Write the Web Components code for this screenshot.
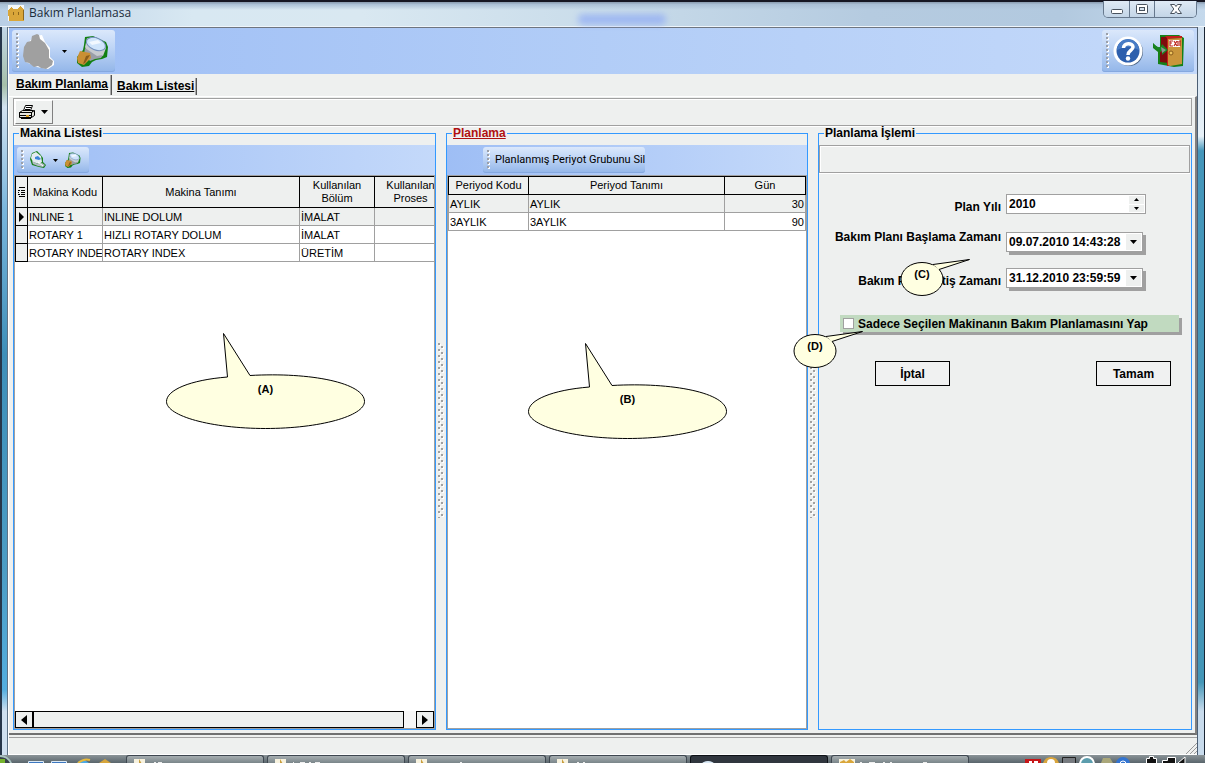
<!DOCTYPE html>
<html lang="tr">
<head>
<meta charset="utf-8">
<title>Bakım Planlamasa</title>
<style>
html,body{margin:0;height:100%}
body{font:11px/14px "Liberation Sans",Arial,sans-serif;color:#000;overflow:hidden}
</style>
</head>
<body>
<maintenance-app></maintenance-app>
<script>
const define=(name,html,setup)=>customElements.define(name,class extends HTMLElement{
  constructor(){super();const t=document.createElement('template');t.innerHTML=html;
    this.attachShadow({mode:'open'}).append(t.content.cloneNode(true));}
  connectedCallback(){if(setup)setup(this,this.shadowRoot);}
});
const setSvg=(svg,w,h,vb,inner)=>{svg.setAttribute('width',w);svg.setAttribute('height',h);svg.setAttribute('viewBox',vb);svg.innerHTML=inner;};

/* Title bar with the caption buttons */
define('title-bar',`<style>
:host{display:flex;align-items:center;height:27px;padding:0 8px;box-sizing:border-box;position:relative;
 background:linear-gradient(#161622 0 2px,#8fa1b5 2px 3px,#a9bed4 4px,transparent 10px),linear-gradient(90deg,#b9cfe6,#d8e8f2 16%,#d9e8f1 30%,#c9dcea 50%,#b5cbe0 72%,#b2c9df 88%,#c5d9ec);border-bottom:1px solid #eef5fb}
h1{margin:0 0 0 4px;font:12px/16px "Open Sans","Noto Sans",sans-serif;color:#1b2c3c;flex:1}
svg{display:block}
.haze{position:absolute;left:48%;top:14px;width:88px;height:11px;border-radius:5px;background:#8fabf5;opacity:.7;filter:blur(3px)}
.caps{display:flex;align-self:flex-start;margin-top:1px;border:1px solid #66788d;border-top:0;border-radius:0 0 5px 5px;overflow:hidden;height:16px}
button{border:0;border-left:1px solid #66788d;padding:0;width:25px;background:linear-gradient(#dfeaf5,#c3d5e7);display:flex;align-items:center;justify-content:center}
button:first-child{border-left:0}button:last-child{width:42px}
</style>
<svg width="17" height="17" viewBox="0 0 17 17" shape-rendering="crispEdges"><path fill="#f5f8fa" d="M0 0h16v16H0z"/><path fill="#d9a63a" d="M0 5l2-1 1-2 3 2h4l2-3 2 2 2 1v12H1z"/><path fill="#8c661c" d="M5 7h1v3H5zM10 7h1v3h-1zM15 5h1v10h-1z"/></svg>
<h1>Bakım Planlamasa</h1><i class="haze"></i>
<div class="caps">
<button aria-label="Simge durumuna küçült"><svg width="14" height="12"><rect x="1.5" y="6.500" width="11" height="4" rx="1" fill="#fff" stroke="#48525e"/></svg></button>
<button aria-label="Ekranı kapla"><svg width="14" height="12"><rect x="1.500" y="1.500" width="11" height="9" rx="1" fill="#fff" stroke="#48525e"/><rect x="4.500" y="4.500" width="5" height="3" fill="#d6e2ee" stroke="#48525e"/></svg></button>
<button aria-label="Kapat"><svg width="14" height="12"><path d="M1.500 1.500h4L7 3.500l1.500-2h4L9.200 6l3.300 4.500h-4L7 8.500l-1.500 2h-4L4.800 6z" fill="#fff" stroke="#48525e"/></svg></button>
</div>`);

/* Raised toolbar block with a dotted grip */
define('tool-block',`<style>
:host{display:inline-flex;align-items:center;box-sizing:border-box;border-radius:3px;padding:0 4px;background:linear-gradient(#dbe8fb,#c0d6f6 40%,#93b6e9);box-shadow:inset 0 -1px #85a8df}
svg{display:block;margin-right:2px;height:calc(100% - 6px);flex:none}
</style><svg width="4" shape-rendering="crispEdges"><defs><pattern id="g" width="4" height="4" patternUnits="userSpaceOnUse"><path fill="#fff" d="M1 1h2v2H1z"/><path fill="#9ba0aa" d="M0 0h2v2H0z"/></pattern></defs><rect width="4" height="100%" fill="url(#g)"/></svg><slot></slot>`);

const icons={
blob:[32,36,'<path fill="#fff" d="M12 3l8-1 3 7 5 6v9l4 4v4l-6 4-6-1-5-1-11-5-1-6 1-9 3-5z"/><path fill="#a0a0a0" d="M10 3l5-2 2 1 1 4 5 4 4 7v8l4 3-1 4-6 4-5-1-3-2-4 1-5-4-4-1-2-6 1-9 3-5 4-1z"/>'],
lens:[34,32,'<path fill="#128012" d="M10 2l8-1 13 6 2 5-1 10-5 2-6 1-4 2-3 4-7 1-5-4v-6l6-7 1-5z"/><path fill="#c7cbd0" d="M12 3l17 6 2 4-3 8-6 1-10-5-2-5z"/><path fill="#9a9ea8" d="M10 13l12 8 6-1-2 3-6 1-5 2-6-7z"/><ellipse cx="21" cy="9" rx="10" ry="6" transform="rotate(22 21 9)" fill="#cfe4fb" stroke="#7490bd"/><path fill="#f2f8ff" d="M14 7l9-2 3 3-9 2z"/><path fill="#c98f34" d="M5 16l10 2 1 5-7 7-6-2-1-5z"/><path fill="#8a5c1b" d="M11 21l4-1-5 8-2 1z"/>'],
gear:[18,18,'<path fill="#19801c" d="M3 2l5-2 3 3 3 4v4l3 3-2 3-5-1-7-2-2-6 1-3z"/><path fill="#e3eaf0" d="M3 3l4-2 5 4 1 6-3 2-6-2-2-4z"/><path fill="#3c84d8" d="M6 6l3-1 3 3-2 1-4-1z"/><path fill="#b3bac4" d="M3 10l6 3 4-1 3 2-2 2-5-1-5-2z"/><path stroke="#fff" fill="none" d="M9 11l5 4"/>'],
help:[32,32,'<circle cx="17" cy="17" r="14" fill="#4d6585"/><circle cx="16" cy="16" r="14.500" fill="#fff"/><circle cx="16" cy="16" r="11.500" fill="#2d5fad"/><path fill="#477bc5" d="M5 15a11 11 0 0 1 22 0q-11-6-22 0z"/><path fill="none" stroke="#fff" stroke-width="3.500" d="M11.500 13c0-5.500 9.500-5.500 9.500-1 0 3.500-5 3.500-5 8"/><circle cx="16" cy="23.500" r="2.200" fill="#fff"/>'],
exit:[34,34,'<path fill="#168018" d="M8 1h19l5 3-1 28-9 1-16-3V18L1 14V9l5 5 2-1z"/><path fill="#7d0c0d" d="M9 3h8v26l-9-1V18h1z"/><path fill="#c41f19" d="M13 2h17v2l-13 1v27h-2V4z"/><path fill="#c9953b" d="M16 5l14-1v26l-12 2-2-1z"/><path fill="#fff" d="M17 6h11v7H17z"/><path stroke="#bd2922" fill="none" stroke-width="1.200" d="M21 7h-3v5h3m-3-3h2m2-2 3 5m0-5-3 5m4-5v5m1-5h2m-1 0v5"/><circle cx="19" cy="19" r="2" fill="#efc45e" stroke="#86591b"/><path fill="#198423" d="M1 9q4 5 8 4l1-3 6 6-6 5v-4q-7 0-9-8z"/><path fill="#8c9596" d="M9 13l5 3-4 3z"/>'],
printer:[18,16,'<path fill="#fff" stroke="#000" d="M5.500 6.500l2-5h7l-2 5z"/><path stroke="#000" fill="none" d="M8 3.500h5M7 5.500h5"/><path fill="#e5e5e0" stroke="#000" d="M1.500 8.500l3-2h11l-2 2zM1.500 8.500h12v5h-12zM13.500 8.500l3-2v5l-3 2z"/><path stroke="#000" d="M1 11.500h12"/><path fill="#d99d24" d="M8 11h3v2H8z"/><path fill="#000" d="M3 14h10v1H3z"/>']
};
define('app-icon',`<style>:host{display:block;flex:none}svg{display:block}</style><svg></svg>`,(h,r)=>{
 const [w,x,p]=icons[h.getAttribute('name')],s=+h.getAttribute('size')||w;
 setSvg(r.querySelector('svg'),s,Math.round(x*s/w),`0 0 ${w} ${x}`,p);});
define('arrow-glyph',`<style>:host{display:block;flex:none}svg{display:block}</style><svg width="7" height="4"><path d="M0 0h7L3.500 4z"/></svg>`);

/* Group box: blue frame with its caption on the top edge */
define('group-box',`<style>
:host{display:flex;min-width:0;min-height:0}
fieldset{flex:1;display:flex;flex-direction:column;min-width:0;margin:0;padding:5px 0 0;border:1px solid #3399ff}
legend{margin-left:5px;padding:0 1px;font:bold 12px/14px "Liberation Sans",Arial,sans-serif}
:host([hot]) legend{color:#b01010;text-decoration:underline}
</style><fieldset><legend><slot name="caption"></slot></legend><slot></slot></fieldset>`);

define('dot-splitter',`<style>:host{display:flex;align-items:center;justify-content:center;padding-top:4px}svg{display:block}</style>
<svg width="6" height="175" shape-rendering="crispEdges"><defs><pattern id="d" width="6" height="6" patternUnits="userSpaceOnUse"><path fill="#fff" d="M1 1h2v2H1zM4 4h2v2H4z"/><path fill="#a0a0a0" d="M0 0h2v2H0zM3 3h2v2H3z"/></pattern></defs><rect width="6" height="175" fill="url(#d)"/></svg>`);

const gridCss=`<style>
:host{display:flex;flex-direction:column;flex:1;min-height:0}
.bar{height:30px;display:flex;align-items:center;background:linear-gradient(90deg,#9ebef5,#c4d9fa);flex:none}
.bar tool-block{height:26px}
.grid{flex:1;min-height:0;border:1px solid #a0a0a0;background:#fff;overflow:hidden;display:flex;flex-direction:column}
.view{flex:1;overflow:hidden}
table{border-collapse:collapse;table-layout:fixed}
th,td{box-sizing:border-box;font-weight:normal;padding:0 0 0 1px;overflow:hidden;white-space:nowrap}
th{background:#eef0ef;border:1px solid #000;padding:0 2px;line-height:13px;white-space:normal}
td{height:18px;line-height:16px;border:1px solid #a0a0a0}
tr.sel td{background:#eef0ef}
td.num{text-align:right;padding-right:1px}
button{border:0;background:none;padding:0;margin:0;color:#000;font:inherit;display:flex;align-items:center}
svg{display:block}
</style>`;
define('machine-list',gridCss+`<style>
tool-block{margin-left:3px;width:72px}tool-block button:nth-of-type(1){margin-left:2px}tool-block button:nth-of-type(2){margin:0 6px}
table{width:431px}thead tr{height:31px}td.mark{background:#eef0ef;border-color:#000;padding:0}
.scroll{display:flex;height:17px;flex:none;box-sizing:border-box}
.scroll button{box-sizing:border-box;width:18px;border:1px solid #000;background:#eef0ef;justify-content:center}
.track{flex:1;padding-right:12px;background:#f7f7f7}.thumb{height:15px;border:1px solid #000;background:#eef0ef}
</style>
<div class="bar"><tool-block><button aria-label="Makina işlemleri"><app-icon name="gear"></app-icon></button><button aria-label="Seçenekler"><svg width="5" height="3"><path d="M0 0h5L2.500 3z"/></svg></button><button aria-label="Ara"><app-icon name="lens" size="17"></app-icon></button></tool-block></div>
<div class="grid"><div class="view"><table><colgroup><col width="12"><col width="75"><col width="197"><col width="75"><col width="72"></colgroup>
<thead><tr><th style="padding:0"><svg width="8" height="10" style="margin:auto"><path d="M1 .5h6M3 3.500h4M3 5.500h4M3 7.500h4M1 9.500h6M0 3.500h2M0 5.500h1M0 7.500h2" stroke="#000"/></svg></th><th>Makina Kodu</th><th>Makina Tanımı</th><th>Kullanılan Bölüm</th><th>Kullanılan Proses</th></tr></thead>
<tbody><tr class="sel"><td class="mark"><svg width="5" height="10" style="margin:auto"><path d="M0 0l5 5-5 5z"/></svg></td><td>INLINE 1</td><td>INLINE DOLUM</td><td>İMALAT</td><td></td></tr>
<tr><td class="mark"></td><td>ROTARY 1</td><td>HIZLI ROTARY DOLUM</td><td>İMALAT</td><td></td></tr>
<tr><td class="mark"></td><td>ROTARY INDE</td><td>ROTARY INDEX</td><td>ÜRETİM</td><td></td></tr></tbody></table></div>
<div class="scroll"><button aria-label="Sola kaydır"><svg width="6" height="10"><path d="M6 0v10L0 5z"/></svg></button><div class="track"><div class="thumb"></div></div><button aria-label="Sağa kaydır"><svg width="6" height="10"><path d="M0 0v10l6-5z"/></svg></button></div></div>`);
define('period-list',gridCss+`<style>
tool-block{margin-left:36px;width:162px}tool-block button{margin-left:2px;white-space:nowrap;font:11px/14px Roboto,"Liberation Sans",sans-serif}
table{width:100%}thead tr{height:18px}
</style>
<div class="bar"><tool-block><button>Planlanmış Periyot Grubunu Sil</button></tool-block></div>
<div class="grid"><div class="view"><table><colgroup><col width="80"><col width="196"><col></colgroup>
<thead><tr><th>Periyod Kodu</th><th>Periyod Tanımı</th><th>Gün</th></tr></thead>
<tbody><tr class="sel"><td>AYLIK</td><td>AYLIK</td><td class="num">30</td></tr><tr><td>3AYLIK</td><td>3AYLIK</td><td class="num">90</td></tr></tbody></table></div></div>`);

define('plan-form',`<style>
:host{display:block;font-weight:bold;line-height:14px}
.strip{height:26px;border:1px solid #a0a0a0;box-shadow:inset 1px 1px #fff,0 1px #fff;margin-right:1px}
form{margin:0;padding:21px 12px 0 21px}
.rows{display:grid;grid-template-columns:minmax(0,1fr) 140px;grid-template-rows:20px 22px 20px;gap:16px 5px;padding-right:33px;justify-items:end}
.rows label{font-size:12px;white-space:nowrap}
label[for=year]{align-self:end}label[for=start]{align-self:start}label[for=end]{align-self:end}
.field{align-self:end;display:flex;width:100%;height:20px;box-sizing:border-box;border:1px solid #a0a0a0;background:#fff;padding:1px}
.field input{flex:1;min-width:0;border:0;padding:0 1px;margin:0;font:bold 12px/14px "Liberation Sans",Arial,sans-serif;background:none;outline:0}
.date{width:137px;justify-self:start;box-shadow:3px 3px #a0a0a0}
.field button{border:0;background:#eef0ef;padding:0;width:15px;display:flex;align-items:center;justify-content:center}
.spin{display:flex;flex-direction:column;gap:1px}.spin button{flex:1}
svg{display:block}
.check{display:flex;align-items:center;gap:4px;height:17px;margin-top:27px;padding-left:3px;background:#c1dac0;box-shadow:3px 3px #a0a0a0;font-size:12px;white-space:nowrap}
.check input{appearance:none;margin:0;width:11px;height:11px;border:1px solid #a0a0a0;background:#fff;box-sizing:border-box}
.actions{display:flex;justify-content:space-between;padding:29px 8px 0 35px}
.actions button{width:75px;height:25px;border:1px solid #000;background:#f0f1f1;padding:0;font:bold 12px/14px "Liberation Sans",Arial,sans-serif;color:#000}
</style>
<div class="strip"></div>
<form onsubmit="return false"><div class="rows">
<label for="year">Plan Yılı</label><div class="field"><input id="year" value="2010"><span class="spin"><button type="button" aria-label="Artır"><svg width="5" height="3"><path d="M0 3h5L2.500 0z"/></svg></button><button type="button" aria-label="Azalt"><svg width="5" height="3"><path d="M0 0h5L2.500 3z"/></svg></button></span></div>
<label for="start">Bakım Planı Başlama Zamanı</label><div class="field date"><input id="start" value="09.07.2010 14:43:28"><button type="button" aria-label="Tarih seç"><arrow-glyph></arrow-glyph></button></div>
<label for="end">Bakım Planı Bitiş Zamanı</label><div class="field date"><input id="end" value="31.12.2010 23:59:59"><button type="button" aria-label="Tarih seç"><arrow-glyph></arrow-glyph></button></div>
</div>
<div class="check"><input type="checkbox" id="only"><label for="only">Sadece Seçilen Makinanın Bakım Planlamasını Yap</label></div>
<div class="actions"><button>İptal</button><button>Tamam</button></div></form>`);

/* Annotation balloon laid over the window */
define('note-balloon',`<style>
:host{position:absolute;display:block;pointer-events:none}
svg{display:block}span{position:absolute;left:0;text-align:center;font:bold 11px/14px "Liberation Sans",Arial,sans-serif}
</style><svg></svg><span><slot></slot></span>`,(h,r)=>{
 const small=h.hasAttribute('small'),s=r.querySelector('svg'),t=r.querySelector('span');
 const body=small?'<ellipse cx="22" cy="20" rx="21" ry="16.500" fill="#ffffe1" stroke="#000"/><path d="M33 5.500L69.500.500 39 10.500" fill="#ffffe1" stroke="#000"/><path d="M31 6.500L33 6.200 39 10.200 37 12z" fill="#ffffe1"/>'
  :'<path d="M57.500.5L61.500 44C24 47 .5 57 .5 68.500 .5 83 45 95.500 99.500 95.500S198.500 83 198.500 68.500C198.500 50 145 39 84 42.500Z" fill="#ffffe1" stroke="#000"/>';
 const w=small?71:200,g=small?38:97;
 setSvg(s,w,g,`0 0 ${w} ${g}`,body);
 t.style.cssText=small?'width:44px;top:8px':'width:199px;top:49px';});

define('task-bar',`<style>
:host{display:flex;height:8px;flex:none;background:linear-gradient(#8b9498,#59656c);overflow:hidden;align-items:stretch}
.orb{width:126px;flex:none}.tray{flex:1}
.item{width:138px;margin-right:3px;box-sizing:border-box;border:1px solid #3e4750;border-bottom:0;border-radius:3px 3px 0 0;background:linear-gradient(#a6aeb1,#7a8589);padding:3px 0 0 7px;overflow:hidden}
.item.on{background:#30363e;border-color:#0d1116}svg{display:block}
</style>
<svg class="orb" width="126" height="8"><path fill="#a9c3c1" d="M0 0q8 0 12 8H0z"/><path fill="#38414a" d="M0 2q7 0 10 6H0z"/><path fill="#75b32e" d="M0 4h5v4H0z"/><path fill="#3c77c0" stroke="#dbe9f5" d="M28.500 6.500h15v3h-15zM51.500 6.500h15v3h-15z"/><path fill="#4ca9e6" d="M77 8q5-6 12 0z"/><path fill="none" stroke="#e8b93b" stroke-width="2" d="M78 8q6-5 12-3"/><path fill="#d6a53c" d="M99 8l6-4 6 4z"/></svg>
<div class="item"><svg width="30" height="5"><path fill="#f7f2df" d="M0 0h11v5H0z"/><path fill="#c99d3b" d="M5 0l3 5H5z"/><path fill="#eee" d="M20 3h2v2h-2zM24 3h4v2h-4z"/></svg></div>
<div class="item"><svg width="50" height="5"><path fill="#f7f2df" d="M0 0h11v5H0z"/><path fill="#c99d3b" d="M5 0l3 5H5z"/><path fill="#eee" d="M18 3h1v2h-1zM25 3h5v2h-5zM34 3h2v2h-2zM40 3h5v2h-5z"/></svg></div>
<div class="item"><svg width="50" height="5"><path fill="#f7f2df" d="M0 0h11v5H0z"/><path fill="#c99d3b" d="M5 0l3 5H5z"/><path fill="#eee" d="M44 3h2v2h-2z"/></svg></div>
<div class="item"><svg width="50" height="5"><path fill="#f7f2df" d="M0 0h11v5H0z"/><path fill="#c99d3b" d="M5 0l3 5H5z"/><path fill="#eee" d="M20 3h2v2h-2zM26 3h2v2h-2z"/></svg></div>
<div class="item on"><svg width="30" height="5"><ellipse cx="10" cy="5" rx="6" ry="3" fill="#d9e9f6"/></svg></div>
<div class="item"><svg width="110" height="5"><path fill="#f7f2df" d="M0 0h16v5H0z"/><path fill="#d9a63a" d="M1 5V3l4-2 2 2 4-3 4 3v2z"/><path fill="#eee" d="M21 3h2v2h-2zM30 3h6v2h-6zM44 3h2v2h-2zM51 3h2v2h-2zM84 3h4v2h-4z"/></svg></div>
<div class="tray"></div>
<svg width="180" height="8"><path fill="#c71618" d="M0 4h16v4H0z"/><path fill="#fff" d="M4 6h3v2H4zM9 6h4v2H9z"/><path fill="#d9a53d" d="M18 8q2-6 8-6t8 6z"/><circle cx="26" cy="8" r="4" fill="#fff"/><path fill="#777b80" stroke="#222" d="M37.500 2.500h13v6h-13z"/><circle cx="62" cy="9" r="7" fill="#5c9dad" stroke="#fff" stroke-width="2"/><path fill="#aaa77a" d="M76 8l2-5h7l3 5z"/><circle cx="98" cy="9" r="7" fill="#3374d0"/><circle cx="98" cy="9" r="3" fill="none" stroke="#fff"/><path fill="#111" stroke="#fff" d="M121.500 8V3.500h3v-2h4v2h3V8M137.500 8V5.500h5v-3h8V8M153 8l7-6v6"/></svg>`);

define('maintenance-app',`<style>
:host{display:flex;flex-direction:column;min-height:100vh;position:relative;box-sizing:border-box;overflow:hidden}
.mid{flex:1;display:flex;min-height:0}
.edge{width:8px;flex:none;box-sizing:border-box;border-left:2px solid #26364a;background:linear-gradient(#c3d7e8,#a5bfa9 8%,#d2e2f1 11%,#7ab6dd 25%,#3e8fb9 45%,#4c9dc5 75%,#54aedf 91%,#cfe0f0 94%);border-right:1px solid #5d7286}
.edge.r{border-left:1px solid #4c5f74;border-right:1px solid #1a2533;background:linear-gradient(#d2e1f0,#e7f1f8 15%,#4597bb 17%,#4497b8 90%,#c8dbec 94%)}
.client{flex:1;display:flex;flex-direction:column;min-width:0;background:#eef0ef;border-top:1px solid #6e7580;border-left:1px solid #fff}
.main{height:46px;flex:none;display:flex;justify-content:space-between;align-items:center;padding:0 3px;background:linear-gradient(90deg,#9ebef5,#b2cdf7 50%,#c4d9fa)}
.main tool-block{height:42px}
button{border:0;background:none;padding:0;font:inherit;color:#000;display:flex;align-items:center}
svg{display:block}
.tabs{display:flex;align-items:flex-end;height:22px;flex:none}
.tabs a{font-weight:bold;font-size:12px;color:#000;white-space:nowrap;box-sizing:border-box;border-right:1px solid #555;box-shadow:inset -1px 0 #aaa;margin-bottom:1px}
.tabs a:nth-child(1){height:20px;width:103px;padding-left:7px;line-height:18px}
.tabs a:nth-child(2){height:17px;width:85px;padding-left:5px;line-height:17px}
.page{flex:1;display:flex;flex-direction:column;min-height:0;border-top:1px solid #fff;border-right:2px solid #808080;border-bottom:2px solid #707070;padding:1px 3px 3px 4px}
.print{display:flex;height:26px;flex:none;border:1px solid #a0a0a0;box-shadow:inset 1px 1px #fff,0 1px #fff}
.print button{margin:1px 0 1px 1px;border:1px solid;border-color:#fff #808080 #808080 #fff;padding:0 2px;gap:5px;width:38px;box-sizing:border-box}
.cols{flex:1;display:grid;grid-template-columns:minmax(0,423fr) 10px minmax(0,362fr) 10px minmax(0,374fr);min-height:0}
.status{height:16px;flex:none;border-top:1px solid #a0a0a0;margin-top:2px;display:flex;justify-content:flex-end;align-items:flex-end;border-bottom:1px solid #fff}
</style>
<title-bar></title-bar>
<div class="mid"><div class="edge"></div><div class="client">
<div class="main"><tool-block style="width:103px"><button aria-label="Planla"><app-icon name="blob"></app-icon></button><button aria-label="Seçenekler" style="margin:0 8px"><svg width="5" height="3"><path d="M0 0h5L2.500 3z"/></svg></button><button aria-label="Ara"><app-icon name="lens"></app-icon></button></tool-block>
<tool-block style="width:92px"><button aria-label="Yardım"><app-icon name="help"></app-icon></button><button aria-label="Çıkış" style="margin-left:8px"><app-icon name="exit"></app-icon></button></tool-block></div>
<nav class="tabs"><a href="#planlama">Bakım Planlama</a><a href="#liste">Bakım Listesi</a></nav>
<div class="page"><div class="print"><button aria-label="Yazdır"><app-icon name="printer"></app-icon><arrow-glyph></arrow-glyph></button></div>
<div class="cols"><group-box><span slot="caption">Makina Listesi</span><machine-list></machine-list></group-box><dot-splitter></dot-splitter>
<group-box hot><span slot="caption">Planlama</span><period-list></period-list></group-box><dot-splitter></dot-splitter>
<group-box><span slot="caption">Planlama İşlemi</span><plan-form></plan-form></group-box></div></div>
<div class="status"><svg width="12" height="12"><path d="M1 12L12 1M5 12l7-7M9 12l3-3" stroke="#999"/></svg></div>
</div><div class="edge r"></div></div>
<task-bar></task-bar>
<note-balloon style="left:166px;top:333px">(A)</note-balloon>
<note-balloon style="left:528px;top:343px">(B)</note-balloon>
<note-balloon small style="left:900px;top:259px">(C)</note-balloon>
<note-balloon small style="left:793px;top:331px">(D)</note-balloon>`);
</script>
</body>
</html>
